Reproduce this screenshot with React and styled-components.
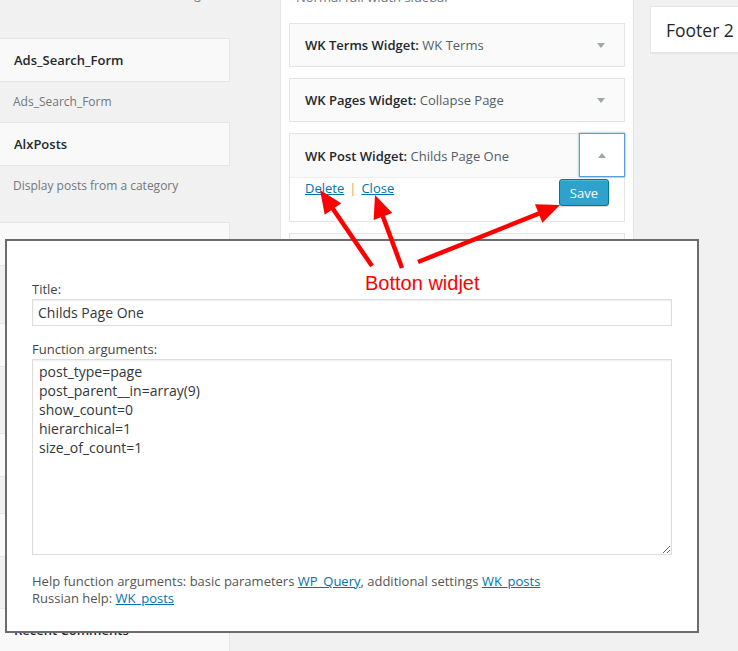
import styled, { createGlobalStyle } from "styled-components";

const GlobalStyle = createGlobalStyle`
  html, body {
    margin: 0;
    padding: 0;
    background: #f1f1f1;
    overflow: hidden;
  }
  body {
    font-family: "Open Sans", "Liberation Sans", sans-serif;
    font-size: 13px;
    color: #444;
  }
`;

const available = [
  { desc: "Most recent entries from the blog", descHeight: 63 },
  { name: "Ads_Search_Form", desc: "Ads_Search_Form", descHeight: 40 },
  { name: "AlxPosts", desc: "Display posts from a category", descHeight: 56 },
  { name: "Archives", desc: "A monthly archive of your site’s Posts.", descHeight: 57 },
  { name: "Calendar", desc: "A calendar of your site’s Posts.", descHeight: 66 },
  { name: "Categories", desc: "A list or dropdown of categories.", descHeight: 36 },
  { name: "Pages", desc: "A list of your site’s Pages.", descHeight: 51 },
  { name: "Recent Comments" },
];

const sidebarWidgets = [
  { name: "WK Terms Widget:", title: "WK Terms" },
  { name: "WK Pages Widget:", title: "Collapse Page" },
  { name: "WK Post Widget:", title: "Childs Page One", open: true },
  { name: "Text:", title: "Contacts" },
  { name: "Search:", title: "" },
  { name: "Recent Posts:", title: "News" },
];

const args = [
  "post_type=page",
  "post_parent__in=array(9)",
  "show_count=0",
  "hierarchical=1",
  "size_of_count=1",
];

const arrows = [
  { from: [372, 266], to: [320, 190] },
  { from: [402, 268], to: [375, 195] },
  { from: [418, 262], to: [560, 205] },
];

function Arrow({ from, to }) {
  const [x1, y1] = from;
  const [x2, y2] = to;
  const len = Math.hypot(x2 - x1, y2 - y1);
  const ux = (x2 - x1) / len;
  const uy = (y2 - y1) / len;
  const head = 23;
  const half = 10;
  const bx = x2 - ux * head;
  const by = y2 - uy * head;
  const points = [
    [x2, y2],
    [bx - uy * half, by + ux * half],
    [bx + uy * half, by - ux * half],
  ]
    .map((p) => p.join(","))
    .join(" ");
  return (
    <g>
      <line x1={x1} y1={y1} x2={bx + ux * 2} y2={by + uy * 2} stroke="#ff0000" strokeWidth="4.5" />
      <polygon points={points} fill="#ff0000" />
    </g>
  );
}

function SidebarWidget({ name, title, open }) {
  return (
    <WidgetBox>
      <WidgetTop $open={open}>
        <WidgetTitle>
          <strong>{name}</strong>
          {title && <span> {title}</span>}
        </WidgetTitle>
        <Toggle $open={open}>
          <Caret $open={open} />
        </Toggle>
      </WidgetTop>
      {open && (
        <WidgetControls>
          <div>
            <Link href="#">Delete</Link>
            <Separator>|</Separator>
            <Link href="#">Close</Link>
          </div>
          <SaveButton>Save</SaveButton>
        </WidgetControls>
      )}
    </WidgetBox>
  );
}

export default function App() {
  return (
    <Screen>
      <GlobalStyle />
      <Columns>
        <AvailableList>
          {available.map(({ name, desc, descHeight }, index) => (
            <div key={index}>
              {name && <AvailableWidget>{name}</AvailableWidget>}
              {desc && <Description $h={descHeight}>{desc}</Description>}
            </div>
          ))}
        </AvailableList>

        <SidebarPanel>
          <SidebarDescription>Normal full width sidebar</SidebarDescription>
          <WidgetList>
            {sidebarWidgets.map((widget, index) => (
              <SidebarWidget key={index} {...widget} />
            ))}
          </WidgetList>
        </SidebarPanel>

        <SidebarName>Footer 2</SidebarName>
      </Columns>

      <FormShot>
        <FieldLabel>Title:</FieldLabel>
        <TextInput type="text" defaultValue="Childs Page One" readOnly />
        <FieldLabel $gap>Function arguments:</FieldLabel>
        <ArgsArea defaultValue={args.join("\n")} readOnly />
        <HelpText>
          Help function arguments: basic parameters <Link href="#">WP_Query</Link>, additional
          settings <Link href="#">WK_posts</Link>
          <br />
          Russian help: <Link href="#">WK_posts</Link>
        </HelpText>
      </FormShot>

      <Notes width="738" height="651" viewBox="0 0 738 651">
        {arrows.map((arrow, index) => (
          <Arrow key={index} {...arrow} />
        ))}
        <text
          x="365"
          y="290"
          fill="#ff0000"
          fontSize="20"
          fontFamily="'Liberation Sans', Arial, sans-serif"
        >
          Botton widjet
        </text>
      </Notes>
    </Screen>
  );
}

const Screen = styled.div`
  position: relative;
  width: 738px;
  height: 651px;
  overflow: hidden;
`;

const Columns = styled.div`
  display: flex;
  align-items: flex-start;
`;

const AvailableList = styled.div`
  width: 231px;
  flex: none;
  margin: -25px 0 0 -1px;
`;

const AvailableWidget = styled.div`
  box-sizing: border-box;
  height: 44px;
  display: flex;
  align-items: center;
  padding-left: 14px;
  background: #f9f9f9;
  border: 1px solid #e5e5e5;
  font-size: 13px;
  font-weight: 600;
  color: #23282d;
`;

const Description = styled.div`
  box-sizing: border-box;
  height: ${({ $h }) => $h}px;
  padding: 11px 0 0 14px;
  font-size: 12px;
  line-height: 18px;
  color: #72777c;
  white-space: nowrap;
`;

const SidebarPanel = styled.div`
  box-sizing: border-box;
  width: 354px;
  flex: none;
  margin: -23px 0 0 50px;
  padding: 10px 8px 12px;
  background: #fff;
  border: 1px solid #e5e5e5;
`;

const SidebarDescription = styled.div`
  font-size: 13px;
  line-height: 18px;
  padding-left: 7px;
  margin-bottom: 17px;
  color: #72777c;
`;

const WidgetList = styled.div`
  display: flex;
  flex-direction: column;
  gap: 11px;
`;

const WidgetBox = styled.div`
  border: 1px solid #e5e5e5;
  background: #fafafa;
`;

const WidgetTop = styled.div`
  display: flex;
  align-items: center;
  height: ${({ $open }) => ($open ? 43 : 42)}px;
`;

const WidgetTitle = styled.div`
  flex: 1;
  padding-left: 15px;
  font-size: 13px;
  white-space: nowrap;
  overflow: hidden;
  color: #23282d;

  strong {
    font-weight: 600;
  }

  span {
    color: #555d66;
  }
`;

const Toggle = styled.div`
  box-sizing: border-box;
  flex: none;
  width: 46px;
  height: ${({ $open }) => ($open ? 44 : 42)}px;
  margin: ${({ $open }) => ($open ? "-1px -1px 0 0" : "0")};
  display: flex;
  align-items: center;
  justify-content: center;
  border: 1px solid ${({ $open }) => ($open ? "#5b9dd9" : "transparent")};
  box-shadow: ${({ $open }) => ($open ? "0 0 2px rgba(30, 140, 190, 0.8)" : "none")};
  background: ${({ $open }) => ($open ? "#fff" : "transparent")};
`;

const Caret = styled.span`
  width: 0;
  height: 0;
  border-left: 4px solid transparent;
  border-right: 4px solid transparent;
  ${({ $open }) => ($open ? "border-bottom" : "border-top")}: 5px solid #a0a5aa;
`;

const WidgetControls = styled.div`
  display: flex;
  justify-content: space-between;
  align-items: flex-start;
  padding: 1px 15px 15px;
  background: #fff;
  border-top: 1px solid #eee;
  line-height: 18px;
`;

const Link = styled.a`
  color: #0073aa;
  text-decoration: underline;
`;

const Separator = styled.span`
  margin: 0 5px;
  color: #d8a35a;
`;

const SaveButton = styled.button`
  box-sizing: border-box;
  height: 27px;
  padding: 0 10px;
  font-family: inherit;
  font-size: 13px;
  color: #fff;
  background: #2ea2cc;
  border: 1px solid #0074a2;
  border-radius: 3px;
  box-shadow: inset 0 1px 0 rgba(120, 200, 230, 0.5), 0 1px 0 rgba(0, 0, 0, 0.15);
`;

const SidebarName = styled.div`
  box-sizing: border-box;
  flex: none;
  width: 120px;
  height: 47px;
  margin: 6px 0 0 16px;
  padding-left: 15px;
  line-height: 47px;
  font-size: 17.5px;
  color: #23282d;
  background: #fff;
  border: 1px solid #e5e5e5;
  box-shadow: 0 1px 1px rgba(0, 0, 0, 0.04);
`;

const FormShot = styled.div`
  position: absolute;
  left: 5px;
  top: 239px;
  width: 694px;
  height: 394px;
  box-sizing: border-box;
  padding: 39px 25px 0;
  background: #fff;
  border: 2px solid #6c6c6c;
`;

const FieldLabel = styled.label`
  display: block;
  line-height: 18px;
  margin-top: ${({ $gap }) => ($gap ? 14 : 0)}px;
  color: #444;
`;

const TextInput = styled.input`
  display: block;
  box-sizing: border-box;
  width: 100%;
  height: 27px;
  margin: 1px 0 0;
  padding: 0 5px;
  font-family: inherit;
  font-size: 14px;
  color: #32373c;
  border: 1px solid #ddd;
  border-radius: 0;
  box-shadow: inset 0 1px 2px rgba(0, 0, 0, 0.07);
  outline: none;
`;

const ArgsArea = styled.textarea`
  display: block;
  box-sizing: border-box;
  width: 100%;
  height: 196px;
  margin: 1px 0 0;
  padding: 2px 6px;
  font-family: inherit;
  font-size: 14px;
  line-height: 19px;
  color: #32373c;
  border: 1px solid #ddd;
  border-radius: 0;
  box-shadow: inset 0 1px 2px rgba(0, 0, 0, 0.07);
  outline: none;
  resize: vertical;
`;

const HelpText = styled.p`
  margin: 18px 0 0;
  line-height: 17px;
  color: #555;
`;

const Notes = styled.svg`
  position: absolute;
  left: 0;
  top: 0;
  pointer-events: none;
`;
